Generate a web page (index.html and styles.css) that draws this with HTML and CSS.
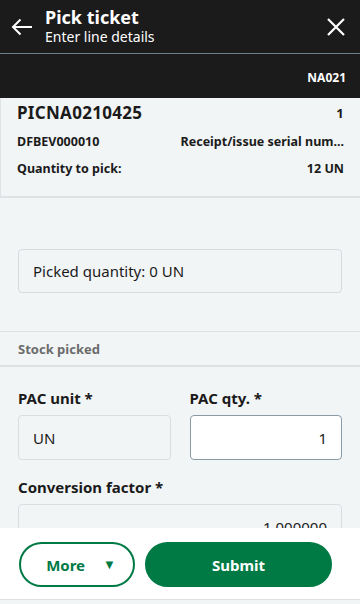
FILE: index.html
```html
<!DOCTYPE html>
<html>
<head>
	<meta charset="utf-8" />
	<link rel="stylesheet" href="styles.css">
</head>
<body>
	<div class="topbar">
		<svg class="back" width="24" height="24" viewBox="0 0 24 24"><path d="M22 12H3M10.5 4.5L3 12l7.5 7.5" fill="none" stroke="#fff" stroke-width="2"/></svg>
		<div class="titles">
			<div class="title">Pick ticket</div>
			<div class="subtitle">Enter line details</div>
		</div>
		<svg class="close" width="20" height="20" viewBox="0 0 20 20"><path d="M2 2l16 16M18 2L2 18" fill="none" stroke="#fff" stroke-width="2.2"/></svg>
	</div>
	<div class="subbar">NA021</div>

	<div class="card">
		<div class="row big"><span>PICNA0210425</span><span class="num">1</span></div>
		<div class="row"><span>DFBEV000010</span><span>Receipt/issue serial num...</span></div>
		<div class="row"><span>Quantity to pick:</span><span>12 UN</span></div>
	</div>

	<div class="picked">Picked quantity: 0 UN</div>

	<div class="section">Stock picked</div>

	<div class="form">
		<div class="pair">
			<div class="field">
				<label>PAC unit *</label>
				<div class="input readonly">UN</div>
			</div>
			<div class="field">
				<label>PAC qty. *</label>
				<div class="input edit num">1</div>
			</div>
		</div>
		<div class="field">
			<label>Conversion factor *</label>
			<div class="input readonly num">1.000000</div>
		</div>
	</div>

	<div class="footer">
		<button class="more">More <span class="tri">&#9660;</span></button>
		<button class="submit">Submit</button>
	</div>
</body>
</html>
```

FILE: styles.css
```css
body
{
	margin:0;
	background-color:#f2f5f6;
	font-family:"Noto Sans", sans-serif;
	color:#1b1b1b;
	height:604px;
	overflow:hidden;
}

.topbar
{
	display:flex;
	align-items:center;
	height:53px;
	background-color:#1b1b1b;
	border-bottom:1px solid #6e808a;
	padding:0 14px 0 10px;
	color:#fff;
}
.back
{
	margin-right:11px;
}
.titles
{
	flex:1;
	margin-top:-2px;
}
.title
{
	font-size:18px;
	font-weight:bold;
	line-height:21px;
}
.subtitle
{
	font-size:14px;
	line-height:17px;
}

.subbar
{
	height:44px;
	background-color:#1b1b1b;
	color:#fff;
	font-size:12px;
	font-weight:bold;
	display:flex;
	align-items:center;
	justify-content:flex-end;
	padding:2px 14px 0 0;
	box-sizing:border-box;
}

.card
{
	border-left:1px solid #dfe3e6;
	border-bottom:2px solid #dfe3e6;
	padding:3px 16px 14px 16px;
}
.row
{
	display:flex;
	justify-content:space-between;
	font-size:12.5px;
	font-weight:bold;
	line-height:27px;
}
.row.big
{
	font-size:17px;
	line-height:24px;
	letter-spacing:0.3px;
	margin-bottom:3px;
}
.row.big .num
{
	font-size:13px;
}

.picked
{
	margin:51px 18px 0 18px;
	height:42px;
	border:1px solid #d5dbdf;
	border-radius:4px;
	display:flex;
	align-items:center;
	padding-left:14px;
	font-size:15px;
}

.section
{
	margin-top:38px;
	border-top:1px solid #dde1e4;
	border-bottom:2px solid #dde1e4;
	height:33px;
	display:flex;
	align-items:center;
	padding-left:18px;
	font-size:13px;
	font-weight:bold;
	color:#6b6b6b;
}

.form
{
	padding:22px 18px 0 18px;
}
.pair
{
	display:flex;
	gap:19px;
}
.pair .field
{
	flex:1;
}
.field
{
	margin-bottom:18px;
}
.field label
{
	display:block;
	font-size:15px;
	font-weight:bold;
	line-height:18px;
	margin-bottom:8px;
}
.input
{
	height:43px;
	border:1px solid #d8dee2;
	border-radius:4px;
	display:flex;
	align-items:center;
	padding:0 14px;
	font-size:15px;
}
.input.num
{
	justify-content:flex-end;
}
.input.edit
{
	background-color:#fff;
	border-color:#8a9ba8;
}

.footer
{
	position:fixed;
	left:0;
	right:0;
	top:528px;
	height:72px;
	background-color:#fff;
	border-bottom:1px solid #dde1e4;
	display:flex;
	align-items:center;
	gap:10px;
	padding:2px 28px 0 19px;
	box-sizing:border-box;
}
.footer button
{
	height:45px;
	border-radius:23px;
	font-family:"Noto Sans", sans-serif;
	font-size:15px;
	font-weight:bold;
	border:2px solid #007a45;
}
.more
{
	width:116px;
	background-color:#fff;
	color:#007a45;
	padding-left:14px;
}
.tri
{
	font-size:13px;
	margin-left:14px;
	vertical-align:2px;
}
.submit
{
	flex:1;
	background-color:#007a45;
	color:#fff;
}
```
